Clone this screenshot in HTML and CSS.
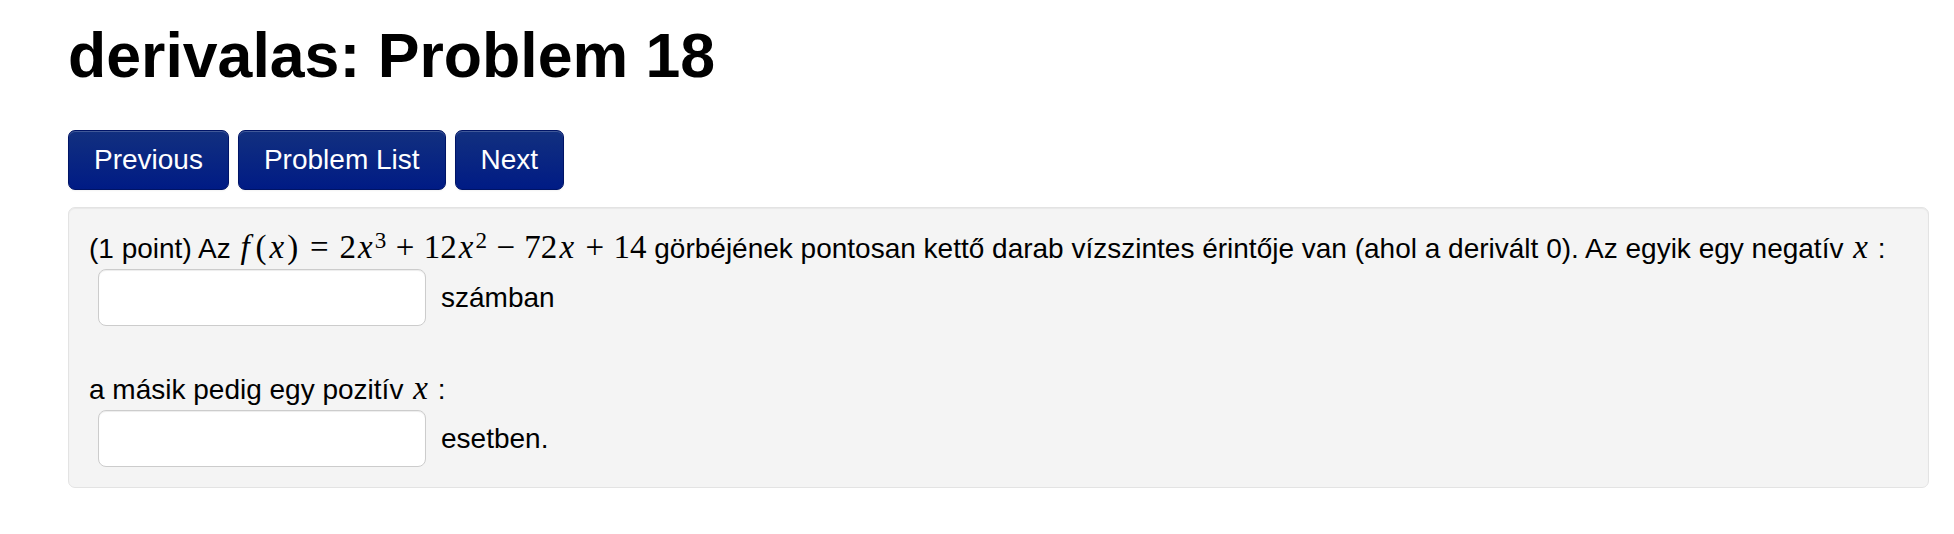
FILE: index.html
```html
<!DOCTYPE html>
<html lang="hu">
<head>
<meta charset="utf-8">
<title>derivalas: Problem 18</title>
<link rel="stylesheet" href="styles.css">
</head>
<body>
<div class="page">
  <h1 class="title">derivalas: Problem 18</h1>
  <div class="nav">
    <a class="btn" href="#">Previous</a>
    <a class="btn" href="#">Problem List</a>
    <a class="btn" href="#">Next</a>
  </div>
  <div class="well">
    <p class="line">(1 point) Az <span class="math"><i class="fn">f</i><span class="paren">(</span><i>x</i><span class="paren">)</span><span class="rel">=</span>2<i>x</i><sup>3</sup><span class="bin">+</span>12<i>x</i><sup>2</sup><span class="bin">−</span>72<i>x</i><span class="bin">+</span>14</span> görbéjének pontosan kettő darab vízszintes érintője van (ahol a derivált 0). Az egyik egy negatív <span class="math"><i>x</i></span> :</p>
    <div class="answer">
      <input class="field" type="text" aria-label="negatív x">
      <span class="after">számban</span>
    </div>
    <p class="line second">a másik pedig egy pozitív <span class="math"><i>x</i></span> :</p>
    <div class="answer">
      <input class="field" type="text" aria-label="pozitív x">
      <span class="after">esetben.</span>
    </div>
  </div>
</div>
</body>
</html>
```
FILE: styles.css
```css
html, body {
  margin: 0;
  padding: 0;
  background: #ffffff;
}

.page {
  padding: 0 25px 0 68px;
  font-family: "Liberation Sans", Arial, Helvetica, sans-serif;
  color: #000;
}

.title {
  margin: 21px 0 0 0;
  font-size: 62.6px;
  line-height: 68px;
  font-weight: bold;
  color: #000;
}

.nav {
  display: flex;
  gap: 9px;
  margin-top: 41px;
}

.btn {
  display: block;
  padding: 9px 25px;
  font-size: 28px;
  line-height: 40px;
  color: #fff;
  text-decoration: none;
  border: 1px solid #001466;
  border-radius: 7px;
  background: linear-gradient(to bottom, #12307f 0%, #001b85 100%);
  box-shadow: inset 0 1px 0 rgba(255, 255, 255, 0.2), 0 1px 2px rgba(0, 0, 0, 0.05);
}

.well {
  margin-top: 17px;
  padding: 21px 20px 20px 20px;
  background: #f4f4f4;
  border: 1px solid #e3e3e3;
  border-radius: 7px;
  box-shadow: inset 0 1px 1px rgba(0, 0, 0, 0.05);
  font-size: 28px;
  line-height: 40px;
}

.line {
  margin: 0;
}

.line.second {
  margin-top: 44px;
}

.math {
  font-family: "Liberation Serif", "Times New Roman", serif;
  font-size: 33px;
  line-height: 1;
}

.math i {
  font-style: italic;
  padding: 0 0.064em;
}

.math i.fn {
  padding: 0 0.15em 0 0.06em;
}

.paren {
  padding: 0 0.028em;
}

.math sup {
  font-size: 70%;
  line-height: 0;
  vertical-align: 0.45em;
}

.rel {
  margin: 0 0.33em;
}

.bin {
  margin: 0 0.283em;
}

.answer {
  display: flex;
  align-items: center;
}

.field {
  box-sizing: border-box;
  width: 328px;
  height: 57px;
  margin: 0 0 0 9px;
  padding: 8px 12px;
  font-size: 28px;
  font-family: "Liberation Sans", Arial, sans-serif;
  background: #fff;
  border: 1px solid #cccccc;
  border-radius: 8px;
  box-shadow: inset 0 1px 1px rgba(0, 0, 0, 0.075);
}

.after {
  margin-left: 15px;
}
```
